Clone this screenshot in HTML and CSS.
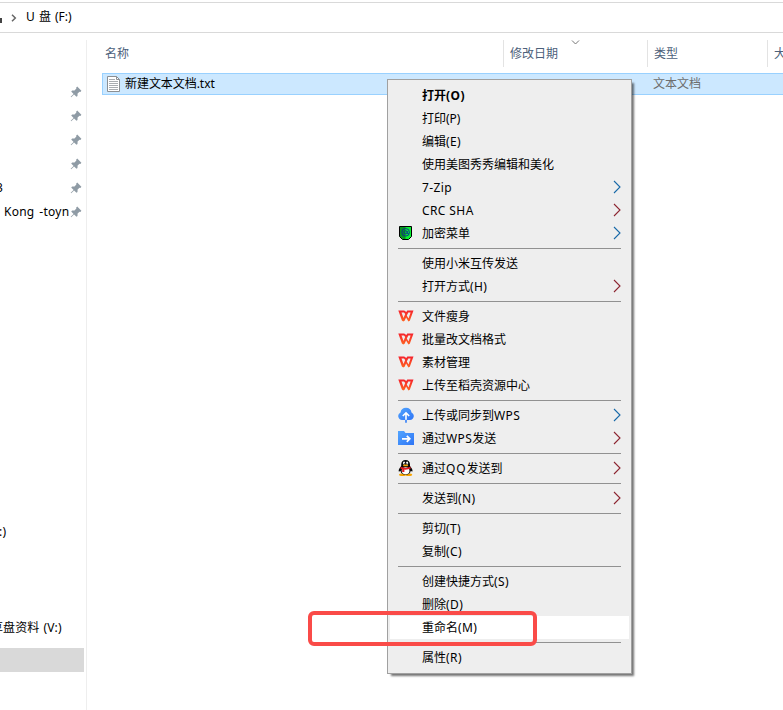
FILE: index.html
```html
<!DOCTYPE html>
<html lang="zh-CN">
<head>
<meta charset="utf-8">
<title>U 盘 (F:)</title>
<link rel="stylesheet" href="styles.css">
</head>
<body>
<svg class="defs" width="0" height="0">
  <defs>
    <linearGradient id="red" x1="0" y1="0" x2="0" y2="1"><stop offset="0" stop-color="#f5222d"/><stop offset="1" stop-color="#ff6420"/></linearGradient>
    <linearGradient id="blue" x1="0" y1="0" x2="1" y2="1"><stop offset="0" stop-color="#52a5ff"/><stop offset="1" stop-color="#2f75f5"/></linearGradient>
    <symbol id="pin" viewBox="0 0 12 12"><path d="M7.2.6 11.4 4.8 10.4 5.9 9.5 5.7 7.6 7.6 7.5 9.9 6.5 10.8 4.1 8.4 1.2 11.3.7 10.8 3.6 7.9 1.2 5.5 2.2 4.5 4.5 4.4 6.4 2.6 6.1 1.7Z" fill="#8f9ba5"/></symbol>
    <symbol id="arrow" viewBox="0 0 8 14"><path d="M1 1 7 7 1 13" fill="none" stroke="currentColor" stroke-width="1.1"/></symbol>
    <symbol id="wps" viewBox="0 0 16 12"><path fill="url(#red)" fill-rule="evenodd" d="M.3.5H6.2L8.3 2 9.3.5H15.5L11.8 10.7 10.4 11.5 8.1 7.6 6.6 10.7 5.2 11.5 3.9 10.5ZM3.5 2.5 5.5 8 7.2 4.1 6 2.5ZM10.3 2.5 8.8 5.4 10.5 8.5 12.6 2.5Z"/></symbol>
  </defs>
</svg>
<div class="window">
  <header class="address">
    <span class="drive"></span>
    <svg class="crumb" width="6" height="8" viewBox="0 0 6 8"><path d="M1 .8 4.3 4 1 7.2" fill="none" stroke="#666" stroke-width="1.5"/></svg>
    <span class="path">U 盘 (F:)</span>
  </header>
  <div class="body">
    <nav class="side">
      <div class="nav"><svg><use href="#pin"/></svg></div>
      <div class="nav"><svg><use href="#pin"/></svg></div>
      <div class="nav"><svg><use href="#pin"/></svg></div>
      <div class="nav"><svg><use href="#pin"/></svg></div>
      <div class="nav"><span class="label clip-a"><b>3</b></span><svg><use href="#pin"/></svg></div>
      <div class="nav"><span class="label kong">Kong -toyn</span><svg><use href="#pin"/></svg></div>
      <div class="nav drive-a"><span class="label clip-b"><b>:)</b></span></div>
      <div class="nav drive-b"><span class="label clip-c"><b>享盘资料 (V:)</b></span></div>
      <div class="nav current"></div>
    </nav>
    <main class="files">
      <div class="columns">
        <span class="name">名称</span>
        <span class="date">修改日期<svg class="sort" width="9" height="5" viewBox="0 0 9 5"><path d="M1 .5 4.5 4 8 .5" fill="none" stroke="#777"/></svg></span>
        <span class="type">类型</span>
        <span class="size">大小</span>
      </div>
      <div class="file">
        <svg class="doc" width="13" height="16" viewBox="0 0 13 16"><path d="M.5.5H9.5L12.5 3.5V15.5H.5Z" fill="#fff" stroke="#8b8f93"/><path d="M9.5.5V3.5H12.5" fill="none" stroke="#8b8f93"/><path d="M2 3.5H8M2 5.5H11M2 7.5H11M2 9.5H11M2 11.5H11M2 13.5H11" stroke="#a9adb1"/></svg>
        <span class="filename">新建文本文档.txt</span>
        <span class="kind">文本文档</span>
      </div>
    </main>
  </div>
</div>
<div class="menu">
  <div class="item bold"><span>打开<i>(O)</i></span></div>
  <div class="item"><span>打印(P)</span></div>
  <div class="item"><span>编辑<i>(E)</i></span></div>
  <div class="item"><span>使用美图秀秀编辑和美化</span></div>
  <div class="item"><span><i>7-Zip</i></span><svg class="more b"><use href="#arrow"/></svg></div>
  <div class="item"><span><i>CRC SHA</i></span><svg class="more"><use href="#arrow"/></svg></div>
  <div class="item"><svg class="icon" viewBox="0 0 16 16"><path d="M1.5 1.5H13.5V11.5L10.5 14.5H4.5L1.5 11.5Z" fill="#08f030" stroke="#000"/><path d="M2 2H7.5V14H4.7L2 11.3Z" fill="#07931f"/><circle cx="7.6" cy="7.3" r="3.8" fill="none" stroke="#10239c" stroke-width=".9"/><circle cx="7.6" cy="7.3" r="1.6" fill="none" stroke="#10239c" stroke-width=".9"/><path d="M9.2 6V8.4Q10.5 9.6 11.3 8" fill="none" stroke="#10239c" stroke-width=".8"/></svg><span>加密菜单</span><svg class="more b"><use href="#arrow"/></svg></div>
  <hr>
  <div class="item"><span>使用小米互传发送</span></div>
  <div class="item"><span>打开方式<i>(H)</i></span><svg class="more"><use href="#arrow"/></svg></div>
  <hr>
  <div class="item"><svg class="icon wps"><use href="#wps"/></svg><span>文件瘦身</span></div>
  <div class="item"><svg class="icon wps"><use href="#wps"/></svg><span>批量改文档格式</span></div>
  <div class="item"><svg class="icon wps"><use href="#wps"/></svg><span>素材管理</span></div>
  <div class="item"><svg class="icon wps"><use href="#wps"/></svg><span>上传至稻壳资源中心</span></div>
  <hr>
  <div class="item"><svg class="icon" viewBox="0 0 16 16"><path d="M4 13A4 4 0 0 1 2.5 5.4 5.6 5.6 0 0 1 13.5 5.4 4 4 0 0 1 12 13Z" fill="url(#blue)"/><path d="M8 13V6.3M4.8 9 8 5.8 11.2 9" fill="none" stroke="#fff" stroke-width="1.6"/><path d="M8 12.7V15.8" stroke="#3d85f7" stroke-width="1.7"/></svg><span>上传或同步到<i>WPS</i></span><svg class="more b"><use href="#arrow"/></svg></div>
  <div class="item"><svg class="icon" viewBox="0 0 16 16"><path d="M0 1H6L7.5 3H16V15H0Z" fill="url(#blue)"/><path d="M4 8.8H11.5M8.8 5.8 11.8 8.8 8.8 11.8" fill="none" stroke="#fff" stroke-width="1.7"/></svg><span>通过<i>WPS</i>发送</span><svg class="more"><use href="#arrow"/></svg></div>
  <hr>
  <div class="item"><svg class="icon" viewBox="0 0 16 16"><ellipse cx="4.5" cy="14.7" rx="3.5" ry="1.3" fill="#f6a400"/><ellipse cx="10.7" cy="14.7" rx="3.5" ry="1.3" fill="#f6a400"/><path d="M7.6 0C4.8 0 3.2 1.8 3.2 4.5V6C1.6 8 .4 9.8.7 11.2 1 12 1.8 11.4 2.4 10.7 2.9 13.5 4.7 14.6 7.6 14.6S12.3 13.5 12.8 10.7C13.4 11.4 14.2 12 14.5 11.2 14.8 9.8 13.6 8 12 6V4.5C12 1.8 10.4 0 7.6 0Z" fill="#080808"/><ellipse cx="7.6" cy="10.8" rx="3.9" ry="3.5" fill="#fff"/><ellipse cx="6.1" cy="3" rx="1.1" ry="1.5" fill="#fff"/><ellipse cx="9.1" cy="3" rx="1.1" ry="1.5" fill="#fff"/><circle cx="6.4" cy="3.2" r=".5"/><circle cx="8.8" cy="3.2" r=".5"/><ellipse cx="7.6" cy="5.4" rx="2.6" ry=".9" fill="#f6a400"/><path d="M2.8 6.8Q7.6 9 12.4 6.8L12.8 8.5Q10 9.8 6.4 9.6V12H4.2V9.2L2.4 8.5Z" fill="#e51c23"/></svg><span>通过<i class="wide">QQ</i>发送到</span><svg class="more"><use href="#arrow"/></svg></div>
  <hr>
  <div class="item"><span>发送到<i>(N)</i></span><svg class="more"><use href="#arrow"/></svg></div>
  <hr>
  <div class="item"><span>剪切<i>(T)</i></span></div>
  <div class="item"><span>复制<i>(C)</i></span></div>
  <hr>
  <div class="item"><span>创建快捷方式<i>(S)</i></span></div>
  <div class="item"><span>删除<i>(D)</i></span></div>
  <div class="item hover"><span>重命名<i>(M)</i></span></div>
  <hr>
  <div class="item"><span>属性<i>(R)</i></span></div>
</div>
<div class="marker"></div>
</body>
</html>
```
FILE: styles.css
```css
* { box-sizing: border-box; }
body {
  margin: 0;
  width: 783px;
  height: 710px;
  overflow: hidden;
  background: #fff;
  color: #000;
  font: 12px/16px "Noto Sans", "Noto Sans CJK SC", sans-serif;
}
.defs { position: absolute; }
.window { height: 710px; padding-top: 2px; display: flex; flex-direction: column; }
.address {
  height: 31px;
  border-top: 1px solid #d9d9d9;
  border-bottom: 1px solid #d9d9d9;
  display: flex;
  align-items: center;
}
.drive { width: 2px; height: 5px; margin-top: 6px; background: #444; }
.crumb { margin: 0 9px; }
.path { word-spacing: 1px; margin-top: -1px; }
.body { flex: 1; display: flex; padding-top: 7px; }
.side { width: 87px; border-right: 1px solid #eee; padding-top: 40px; }
.nav { height: 24px; width: 84px; display: flex; align-items: center; justify-content: flex-end; }
.nav svg { width: 12px; height: 12px; margin-right: 2px; flex: none; }
.label { flex: 1; overflow: hidden; white-space: nowrap; display: flex; }
.label b { font-weight: 400; flex: none; }
.clip-a b { margin-left: -4px; }
.clip-b b { margin-left: -1px; letter-spacing: .4px; }
.clip-c b { margin-left: -9px; word-spacing: 1px; letter-spacing: .1px; }
.kong { padding-left: 4px; letter-spacing: .25px; word-spacing: 1.5px; }
.drive-a { margin-top: 296px; }
.drive-b { margin-top: 72px; }
.current { margin-top: 8px; background: #d9d9d9; }
.files { flex: 1; min-width: 0; padding-left: 15px; overflow: hidden; }
.columns { display: grid; grid-template-columns: 401px 144px 120px 40px; height: 27px; color: #4c607a; line-height: 27px; white-space: nowrap; }
.name { padding-left: 3px; }
.date, .type, .size { border-left: 1px solid #e3e3e3; padding-left: 6px; position: relative; }
.sort { position: absolute; left: 67px; top: 0; }
.file {
  margin-top: 6px;
  height: 22px;
  width: 700px;
  border: 1px solid #99d1ff;
  background: #cce8ff;
  display: flex;
  align-items: center;
}
.doc { margin: -1px 5px 0 4px; }
.filename { width: 528px; letter-spacing: -.05px; }
.kind { color: #6d6d6d; }
.menu {
  position: absolute;
  left: 387px;
  top: 79px;
  width: 245px;
  height: 595px;
  padding: 4px 2px;
  border: 1px solid #a0a0a0;
  background: #eee;
  box-shadow: 3px 3px 2px -1px rgba(0, 0, 0, .55);
}
.item { height: 23px; display: flex; align-items: center; padding: 0 8px 0 32px; position: relative; }
.item span { flex: 1; white-space: nowrap; }
.item i { font-style: normal; letter-spacing: .4px; }
.item i.wide { letter-spacing: .8px; }
.bold { font-weight: 700; }
.hover { background: #fff; }
.icon { width: 16px; height: 16px; margin: -2px 8px 0 -24px; flex: none; }
.icon.wps { height: 12px; }
.more { width: 8px; height: 14px; flex: none; color: #8c2430; margin-top: -2px; }
.more.b { color: #1769a8; }
.menu hr { height: 1px; border: 0; margin: 3px 8px; background: #919191; }
.marker {
  position: absolute;
  left: 308px;
  top: 611px;
  width: 229px;
  height: 35px;
  border: 4px solid #fa4b48;
  border-radius: 6px;
}
```
